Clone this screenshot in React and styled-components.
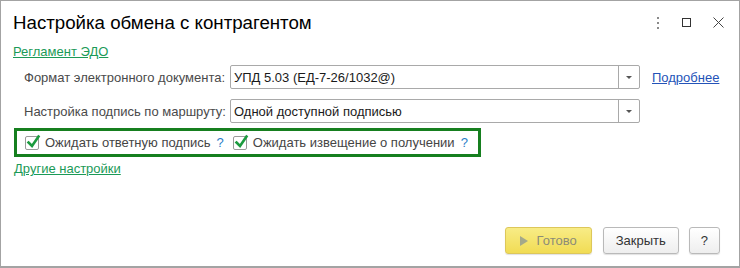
import React from "react";
import styled, { createGlobalStyle } from "styled-components";

const GlobalStyle = createGlobalStyle`
  html, body {
    margin: 0;
    padding: 0;
    background: #ffffff;
  }
  body {
    font-family: "Liberation Sans", Arial, sans-serif;
  }
`;

const Window = styled.div`
  box-sizing: border-box;
  width: 740px;
  height: 268px;
  border: 1px solid #a3a3a3;
  border-bottom-width: 2px;
  background: #fff;
  display: flex;
  flex-direction: column;
`;

const TitleBar = styled.div`
  display: flex;
  align-items: center;
  justify-content: space-between;
  height: 43px;
  padding: 0 15px 0 12px;
`;

const Title = styled.h1`
  margin: 0;
  font-size: 18.7px;
  font-weight: normal;
  color: #000;
`;

const TitleTools = styled.div`
  display: flex;
  align-items: center;
  gap: ${(p) => p.$gap || 20}px;
`;

const Body = styled.div`
  display: flex;
  flex-direction: column;
  align-items: flex-start;
  padding: 0 12px;
`;

const TextLink = styled.a`
  font-size: 13px;
  color: ${(p) => (p.$tone === "blue" ? "#2453b8" : "#1b9a57")};
  text-decoration: underline;
  cursor: pointer;
  white-space: nowrap;
`;

const FieldRow = styled.div`
  display: flex;
  align-items: center;
  padding-left: 11px;
  margin-top: ${(p) => p.$top || 0}px;
`;

const FieldLabel = styled.span`
  width: 206px;
  font-size: 13px;
  color: #4a4a4a;
  white-space: nowrap;
`;

const Select = styled.div`
  box-sizing: border-box;
  width: 410px;
  height: 24px;
  border: 1px solid #a9a9a9;
  border-radius: 2px;
  display: flex;
  align-items: stretch;
  background: #fff;
`;

const SelectValue = styled.div`
  flex: 1;
  display: flex;
  align-items: center;
  padding-left: 3px;
  font-size: 13px;
  color: #1a1a1a;
`;

const SelectButton = styled.div`
  width: 20px;
  border-left: 1px solid #a9a9a9;
  display: flex;
  align-items: center;
  justify-content: center;
`;

const Arrow = styled.span`
  width: 0;
  height: 0;
  border-left: 3px solid transparent;
  border-right: 3px solid transparent;
  border-top: 3px solid #555;
`;

const CheckGroup = styled.div`
  box-sizing: border-box;
  margin-top: 5px;
  margin-left: 1px;
  height: 29px;
  border: 3px solid #167f1f;
  display: flex;
  align-items: center;
  padding: 0 10px 0 8px;
  gap: 9px;
`;

const CheckItem = styled.label`
  display: flex;
  align-items: center;
  font-size: 13px;
  color: #454545;
  white-space: nowrap;
`;

const Box = styled.span`
  position: relative;
  box-sizing: border-box;
  width: 14px;
  height: 14px;
  border: 1px solid #9a9a9a;
  border-radius: 2px;
  margin-right: 6px;
  background: #fff;

  svg {
    position: absolute;
    left: 0px;
    top: -3px;
  }
`;

const Help = styled.span`
  color: #2a7ec8;
  margin-left: 6px;
  font-size: 13px;
`;

const Footer = styled.div`
  margin-top: auto;
  display: flex;
  justify-content: flex-end;
  align-items: center;
  padding: 0 19px 12px 0;
`;

const Button = styled.button`
  box-sizing: border-box;
  height: 27px;
  margin-left: ${(p) => p.$gap || 0}px;
  padding: 0 ${(p) => p.$pad || 13}px;
  font-family: "Liberation Sans", Arial, sans-serif;
  font-size: 13px;
  border-radius: 3px;
  display: flex;
  align-items: center;
  gap: 9px;
  color: ${(p) => (p.$primary ? "#8c8c78" : "#333")};
  border: 1px solid ${(p) => (p.$primary ? "#ddc75a" : "#b9b9b9")};
  background: ${(p) =>
    p.$primary
      ? "linear-gradient(#f8ec86, #f1dc54)"
      : "linear-gradient(#ffffff, #eeeeee)"};
  box-shadow: 0 1px 1px rgba(0, 0, 0, 0.12);
`;

const Play = styled.span`
  width: 0;
  height: 0;
  border-top: 5px solid transparent;
  border-bottom: 5px solid transparent;
  border-left: 8px solid #a4a88a;
`;

function Check({ children }) {
  return (
    <CheckItem>
      <Box>
        <svg width="15" height="16" viewBox="0 0 15 16">
          <path d="M2.5 8.5 L6 12 L12.5 2.5" fill="none" stroke="#1c9b3f" strokeWidth="2.6" strokeLinecap="square" />
        </svg>
      </Box>
      {children}
      <Help>?</Help>
    </CheckItem>
  );
}

export default function App() {
  return (
    <>
      <GlobalStyle />
      <Window>
        <TitleBar>
          <Title>Настройка обмена с контрагентом</Title>
          <TitleTools $gap={22}>
            <svg width="4" height="12" viewBox="0 0 4 12">
              <rect x="1" y="0" width="2" height="2" fill="#8a8a8a" />
              <rect x="1" y="5" width="2" height="2" fill="#8a8a8a" />
              <rect x="1" y="10" width="2" height="2" fill="#8a8a8a" />
            </svg>
            <TitleTools $gap={21}>
              <svg width="10" height="10" viewBox="0 0 10 10">
                <rect x="0.5" y="0.5" width="8" height="8" fill="none" stroke="#333" />
              </svg>
              <svg width="11" height="11" viewBox="0 0 11 11">
                <path d="M0.5 0.5 L10.5 10.5 M10.5 0.5 L0.5 10.5" stroke="#444" strokeWidth="1" />
              </svg>
            </TitleTools>
          </TitleTools>
        </TitleBar>
        <Body>
          <TextLink>Регламент ЭДО</TextLink>
          <FieldRow $top={6}>
            <FieldLabel>Формат электронного документа:</FieldLabel>
            <Select>
              <SelectValue>УПД 5.03 (ЕД-7-26/1032@)</SelectValue>
              <SelectButton><Arrow /></SelectButton>
            </Select>
            <TextLink $tone="blue" style={{ marginLeft: 12 }}>Подробнее</TextLink>
          </FieldRow>
          <FieldRow $top={10}>
            <FieldLabel>Настройка подпись по маршруту:</FieldLabel>
            <Select>
              <SelectValue>Одной доступной подписью</SelectValue>
              <SelectButton><Arrow /></SelectButton>
            </Select>
          </FieldRow>
          <CheckGroup>
            <Check>Ожидать ответную подпись</Check>
            <Check>Ожидать извещение о получении</Check>
          </CheckGroup>
          <TextLink style={{ marginTop: 4, marginLeft: 1 }}>Другие настройки</TextLink>
        </Body>
        <Footer>
          <Button $primary $pad={14}>
            <Play />
            Готово
          </Button>
          <Button $pad={12} $gap={11}>Закрыть</Button>
          <Button $pad={11} $gap={10}>?</Button>
        </Footer>
      </Window>
    </>
  );
}
